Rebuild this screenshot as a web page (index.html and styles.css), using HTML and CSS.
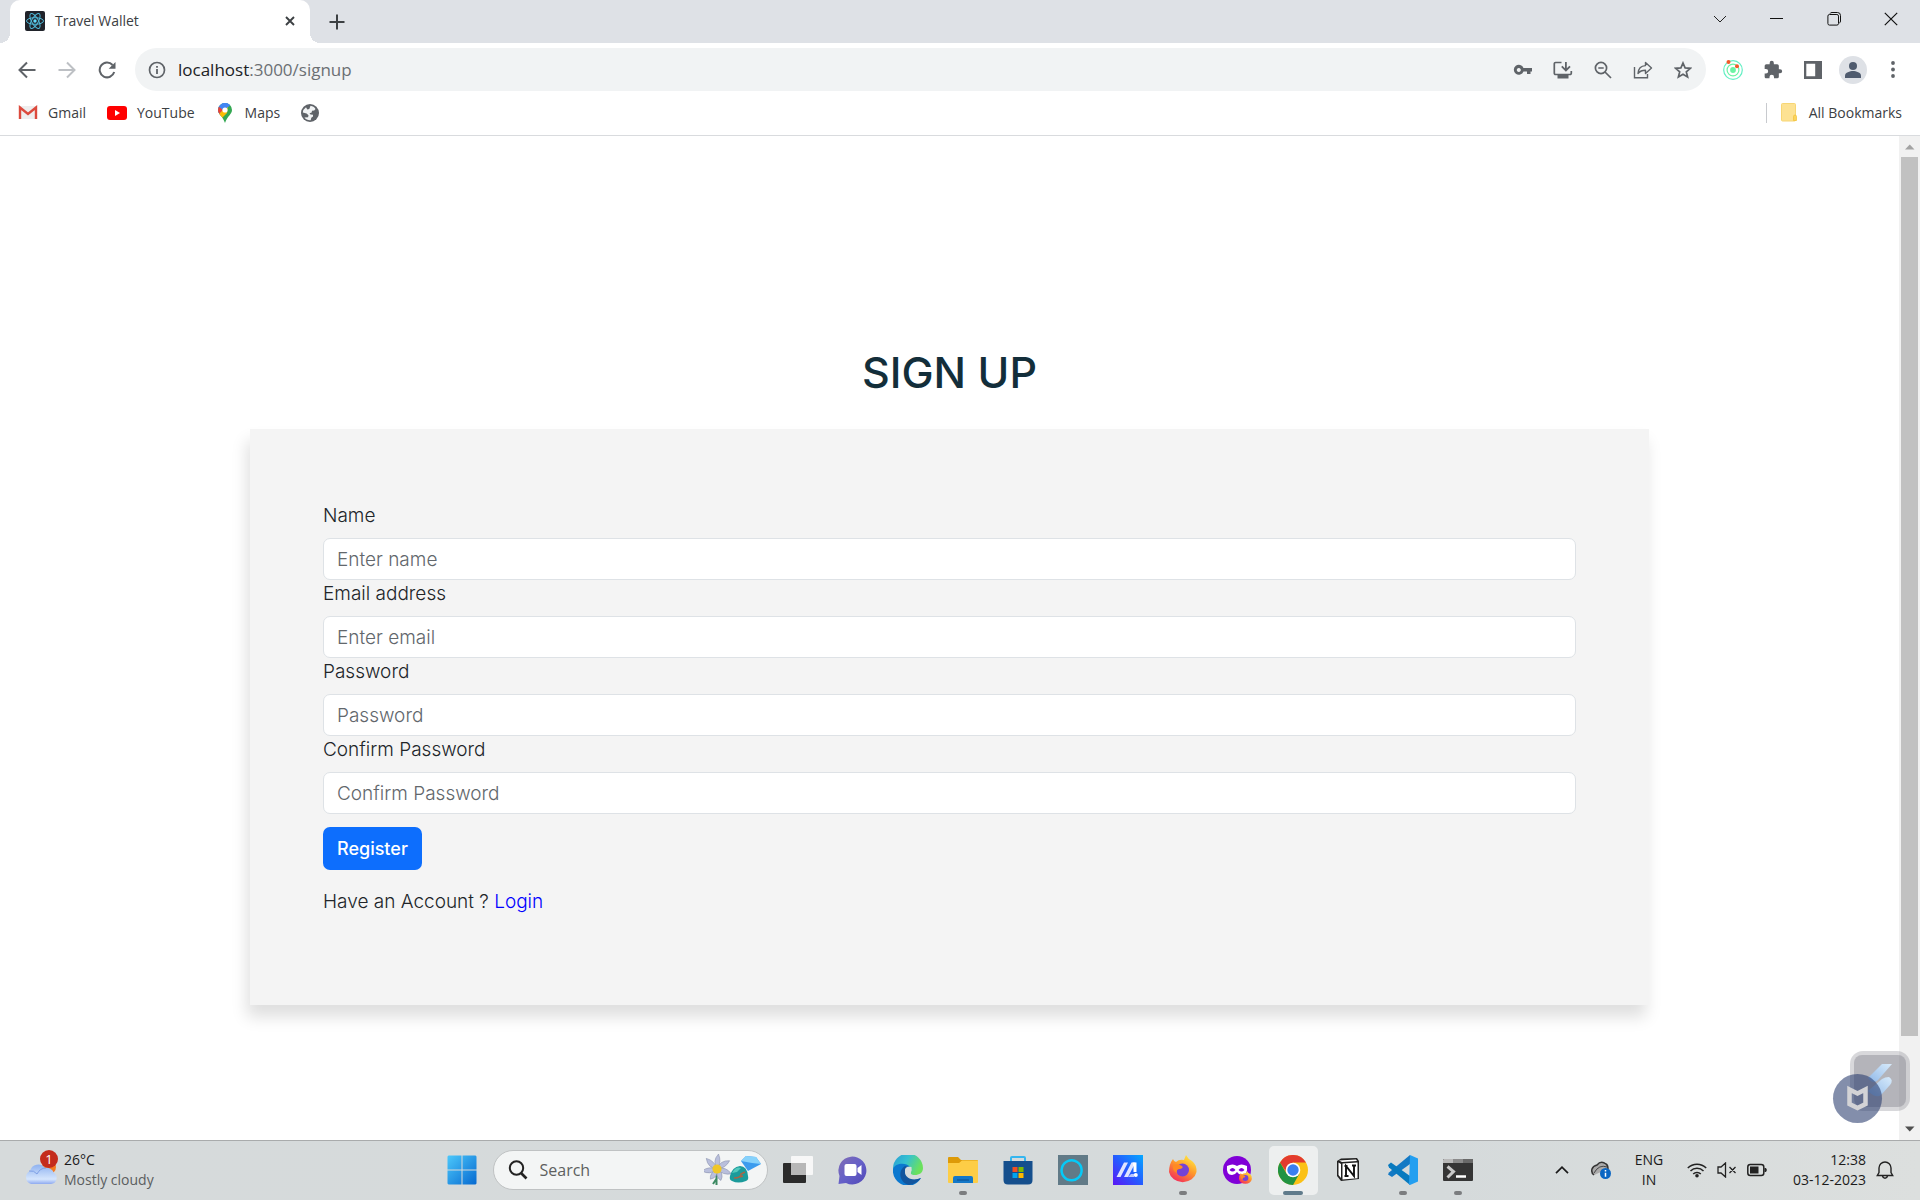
FILE: index.html
```html
<!DOCTYPE html>
<html lang="en">
<head>
<meta charset="utf-8">
<title>Travel Wallet</title>
<link rel="stylesheet" href="styles.css">
</head>
<body>
<header class="browser">
  <div class="tabstrip">
    <div class="tab">
      <svg class="tab-icon" width="20" height="20" viewBox="0 0 20 20"><rect width="20" height="20" rx="2" fill="#20232a"/><g fill="none" stroke="#4fb9d8" stroke-width="1"><ellipse cx="10" cy="10" rx="8.5" ry="3.3"/><ellipse cx="10" cy="10" rx="8.5" ry="3.3" transform="rotate(60 10 10)"/><ellipse cx="10" cy="10" rx="8.5" ry="3.3" transform="rotate(120 10 10)"/></g><circle cx="10" cy="10" r="1.7" fill="#61dafb"/></svg>
      <span class="tab-title">Travel Wallet</span>
      <button class="icon-btn tab-close" aria-label="Close tab"><svg width="10" height="10" viewBox="0 0 10 10"><path d="M1 1l8 8M9 1l-8 8" stroke="#3c4043" stroke-width="1.9"/></svg></button>
    </div>
    <button class="icon-btn new-tab" aria-label="New tab"><svg width="16" height="16" viewBox="0 0 16 16"><path d="M8 .5v15M.5 8h15" stroke="#3c4043" stroke-width="2"/></svg></button>
    <div class="window-controls">
      <button class="icon-btn" aria-label="Search tabs"><svg width="14" height="8" viewBox="0 0 14 8"><path d="M1 1l6 6 6-6" fill="none" stroke="#222"/></svg></button>
      <button class="icon-btn" aria-label="Minimize"><svg width="13" height="13" viewBox="0 0 13 13"><path d="M0 6.5h13" stroke="#111"/></svg></button>
      <button class="icon-btn" aria-label="Restore"><svg width="14" height="14" viewBox="0 0 14 14"><g fill="none" stroke="#111"><rect x=".9" y="2.5" width="10.6" height="10.6" rx="1.6"/><path d="M3 1.6Q3.3.5 5 .5h5.5q3 0 3 3V9q0 1.700-1.200 2"/></g></svg></button>
      <button class="icon-btn" aria-label="Close"><svg width="14" height="14" viewBox="0 0 14 14"><path d="M.8.8l12.400 12.400M13.200.8L.8 13.200" stroke="#111" stroke-width="1.200"/></svg></button>
    </div>
  </div>

  <div class="toolbar">
    <button class="icon-btn" aria-label="Back"><svg width="18" height="18" viewBox="0 0 18 18"><path d="M17.500 9H2M9 1.500L1.500 9 9 16.500" fill="none" stroke="#5f6368" stroke-width="2"/></svg></button>
    <button class="icon-btn" aria-label="Forward"><svg width="18" height="18" viewBox="0 0 18 18"><path d="M.5 9H16M9 1.500L16.500 9 9 16.500" fill="none" stroke="#bdc0c4" stroke-width="2"/></svg></button>
    <button class="icon-btn" aria-label="Reload"><svg width="18" height="18" viewBox="0 0 18 18"><path d="M14.600 4A7.400 7.400 0 1 0 16.200 11" fill="none" stroke="#5f6368" stroke-width="2"/><path d="M17.500 1v6.800h-6.800z" fill="#5f6368"/></svg></button>
    <div class="omnibox">
      <svg class="info" width="18" height="18" viewBox="0 0 18 18"><circle cx="9" cy="9" r="7.500" fill="none" stroke="#5f6368" stroke-width="1.700"/><path d="M9 8v5M9 5v1.800" stroke="#5f6368" stroke-width="1.800"/></svg>
      <div class="url"><span class="host">localhost</span>:3000/signup</div>
      <button class="icon-btn" aria-label="Passwords"><svg width="20" height="12" viewBox="0 0 20 12"><path fill-rule="evenodd" fill="#5f6368" d="M10.500 4H19v3.500h-1.500V10H14V7.500h-3.500A5 5 0 1 1 10.500 4zM5.800 4a2 2 0 1 0 .01 0z"/></svg></button>
      <button class="icon-btn" aria-label="Install app"><svg width="20" height="18" viewBox="0 0 20 18"><path d="M8.500 1.500h-6a1.200 1.200 0 0 0-1.200 1.200v9.600a1.200 1.200 0 0 0 1.200 1.200h14.600a1.200 1.200 0 0 0 1.200-1.200V10" fill="none" stroke="#5f6368" stroke-width="1.700"/><path d="M12.900 1v7.500M8.800 5.400l4.100 4.100L17 5.400" fill="none" stroke="#5f6368" stroke-width="1.800"/><path d="M4.500 14h11v3.500h-11z" fill="#5f6368"/></svg></button>
      <button class="icon-btn" aria-label="Zoom"><svg width="18" height="18" viewBox="0 0 18 18"><g fill="none" stroke="#5f6368" stroke-width="1.700"><circle cx="7" cy="7" r="5.600"/><path d="M4.300 7h5.400M11 11l6 6"/></g></svg></button>
      <button class="icon-btn" aria-label="Share"><svg width="20" height="18" viewBox="0 0 20 18"><path d="M1.500 6v10.800h13V13" fill="none" stroke="#5f6368" stroke-width="1.400"/><path d="M5 12.500C5.300 7.500 8 4.800 12.500 4.600V1.500l6 5.500-6 5.500V9.300C9 9.300 7 10 5 12.500z" fill="none" stroke="#5f6368" stroke-width="1.400" stroke-linejoin="round"/></svg></button>
      <button class="icon-btn" aria-label="Bookmark this page"><svg width="18" height="18" viewBox="0 0 18 18"><path d="M9 2l2.100 4.900 5.300.4-4.100 3.500 1.300 5.200L9 13.200 4.400 16l1.300-5.200L1.600 7.300l5.300-.4z" fill="none" stroke="#5f6368" stroke-width="1.700"/></svg></button>
    </div>
    <button class="icon-btn" aria-label="Extension"><svg width="20" height="22" viewBox="0 0 20 22"><g fill="none" stroke="#63efc4" stroke-width="1.200"><circle cx="10" cy="11" r="9.300"/><circle cx="10" cy="11" r="5.900" stroke="#6bf3a4"/></g><circle cx="10" cy="11" r="2.900" fill="#6bf3a4"/><circle cx="5.500" cy="3" r="2" fill="#f15a29"/><circle cx="14" cy="7.300" r="2" fill="#f15a29"/></svg></button>
    <button class="icon-btn" aria-label="Extensions"><svg width="20" height="20" viewBox="0 0 24 24"><path fill="#5f6368" d="M20.500 11H19V7a2 2 0 0 0-2-2h-4V3.500a2.500 2.500 0 0 0-5 0V5H4a2 2 0 0 0-2 2v3.800h1.500a2.700 2.700 0 0 1 0 5.400H2V20c0 1.100.9 2 2 2h3.800v-1.500a2.700 2.700 0 0 1 5.400 0V22H17a2 2 0 0 0 2-2v-4h1.500a2.500 2.500 0 0 0 0-5z"/></svg></button>
    <button class="icon-btn" aria-label="Side panel"><svg width="18" height="18" viewBox="0 0 18 18"><path fill-rule="evenodd" fill="#5f6368" d="M0 0h18v18H0zM2.300 2.700v12.600h8.900V2.700z"/></svg></button>
    <button class="icon-btn" aria-label="Profile"><svg width="28" height="28" viewBox="0 0 28 28"><circle cx="14" cy="14" r="14" fill="#dee1e6"/><g fill="#4f5b6e"><circle cx="14" cy="10" r="4"/><path d="M6 22v-2.500c0-3 5-4.500 8-4.500s8 1.500 8 4.500V22z"/></g></svg></button>
    <button class="icon-btn" aria-label="Menu"><svg width="4" height="17" viewBox="0 0 4 17"><g fill="#5f6368"><circle cx="2" cy="2" r="1.900"/><circle cx="2" cy="8.500" r="1.900"/><circle cx="2" cy="15" r="1.900"/></g></svg></button>
  </div>

  <nav class="bookmarks">
    <a href="#"><svg width="20" height="16" viewBox="0 0 20 16"><path d="M1 1h18v13H1z" fill="#eee"/><path d="M2 14V2.500l8 6.500 8-6.500V14" fill="none" stroke="#dc4a3d" stroke-width="2.400"/></svg>Gmail</a>
    <a href="#"><svg width="20" height="14" viewBox="0 0 20 14"><rect width="20" height="14" rx="3" fill="#f00"/><path d="M8 4l5 3-5 3z" fill="#fff"/></svg>YouTube</a>
    <a href="#" class="maps"><svg width="14" height="20" viewBox="0 0 14 20"><clipPath id="pin"><path d="M7 0a7 7 0 0 1 7 7c0 4-4.500 6-7 13C4.500 13 0 11 0 7a7 7 0 0 1 7-7z"/></clipPath><g clip-path="url(#pin)"><path d="M0 0h14v20H0z" fill="#34a853"/><path d="M0 0h14L0 15z" fill="#4285f4"/><path d="M0 3l5 4-5 6z" fill="#ea4335"/><path d="M0 12L10 2l-1 8-6 6z" fill="#fbbc04"/><path d="M3 0h10L8 6z" fill="#4285f4"/></g><circle cx="7" cy="7" r="2.600" fill="#fff"/></svg>Maps</a>
    <a href="#" aria-label="Untitled bookmark"><svg width="18" height="18" viewBox="0 0 18 18"><circle cx="9" cy="9" r="9" fill="#5f6368"/><path d="M9.500 1.800c2.300.4 4 1.500 5 3.200l-1.300 1.500-2.200.3-.3 1.800-2.200.7 1 1.300 2.500.2v1.700l-1.700 1.300-.6 2.400c-2.300.3-4.800-.7-6.300-2.700l3.700-.2.400-2L5.600 9.600 1.800 8.500A7.300 7.300 0 0 1 5 3.200l1.300 2.300 2-.6z" fill="#f1f3f4"/></svg></a>
    <a href="#" class="all-bookmarks"><svg width="16" height="19" viewBox="0 0 16 19"><rect x=".5" y=".5" width="14" height="17.500" rx="1" fill="#fde293" stroke="#f7d674"/><path d="M12.500 17.500v-4q0-1.500 1.500-1.500t1.500 1.500v4z" fill="#fbd45c" stroke="#f2c037" stroke-width=".7"/></svg>All Bookmarks</a>
  </nav>
</header>

<main class="viewport">
  <section class="page">
    <div class="container">
      <h1>SIGN UP</h1>
      <form class="card">
        <label for="name">Name</label>
        <input id="name" type="text" placeholder="Enter name">
        <label for="email">Email address</label>
        <input id="email" type="email" placeholder="Enter email">
        <label for="password">Password</label>
        <input id="password" type="password" placeholder="Password">
        <label for="confirm">Confirm Password</label>
        <input id="confirm" type="password" placeholder="Confirm Password">
        <button type="button" class="register">Register</button>
        <p>Have an Account ? <a href="#">Login</a></p>
      </form>
    </div>
  </section>
  <div class="scrollbar">
    <svg width="21" height="21" viewBox="0 0 21 21"><path d="M6 13.500h9.500L10.750 8.500z" fill="#a3a3a3"/></svg>
    <div class="thumb"></div>
    <div class="track"></div>
    <svg width="21" height="21" viewBox="0 0 21 21"><path d="M6 7.500h9.500l-4.750 5z" fill="#505050"/></svg>
  </div>
  <svg class="floating" width="80" height="76" viewBox="0 0 80 76">
    <defs><linearGradient id="bl" x1="0" y1="1" x2="1" y2="0"><stop stop-color="#8fb8e8"/><stop offset="1" stop-color="#d8ebfb"/></linearGradient></defs>
    <rect x="18" y="1" width="60" height="60" rx="13" fill="#70707a" fill-opacity=".27"/>
    <rect x="22" y="5" width="52" height="52" rx="8" fill="#70707a" fill-opacity=".34"/>
    <path d="M36 28L50 14h10L46 30q-5 5-10-2z" fill="url(#bl)"/><path d="M36 41L50 29q3-2 7-2 5 3 1 8L49 45q-5 4-13-4z" fill="url(#bl)"/>
    <circle cx="25.500" cy="48.500" r="24.500" fill="#2a3d6f" fill-opacity=".58"/>
    <path d="M17.500 39.500l8 4 8-4V54l-8 4-8-4z" fill="none" stroke="#d3d3d6" stroke-width="4.500"/>
  </svg>
</main>

<footer class="taskbar">
  <div class="weather">
    <svg width="36" height="40" viewBox="0 0 36 40"><defs><linearGradient id="cl" x1="0" y1="0" x2="0" y2="1"><stop stop-color="#8fb2f0"/><stop offset=".75" stop-color="#d6e6fd"/><stop offset="1" stop-color="#8faaf0"/></linearGradient></defs><circle cx="24" cy="17" r="7" fill="#f47b20"/><path d="M6 34a7 7 0 0 1-1-13 8.500 8.500 0 0 1 15-3 8 8 0 0 1 9 5 6 6 0 0 1-3 11z" fill="url(#cl)"/><path d="M4 21q5-1 8 3 3-6 9-6" fill="none" stroke="#7fa0e6"/><circle cx="24" cy="9" r="9" fill="#c42b1c"/><text x="24" y="14" class="badge-text">1</text></svg>
    <div><div>26°C</div><div class="muted">Mostly cloudy</div></div>
  </div>
  <div class="apps">
    <button class="app" aria-label="Start"><svg width="30" height="30" viewBox="0 0 30 30"><defs><linearGradient id="wn" x2="1" y2="1"><stop stop-color="#4cc8fb"/><stop offset="1" stop-color="#0669d0"/></linearGradient></defs><path fill="url(#wn)" d="M1.500.5H14.500v14H.5v-13zM15.500.5h13l1 1v13h-14zM.5 15.500h14v14h-13l-1-1zM15.500 15.500h14v13l-1 1h-13z"/></svg></button>
    <label class="search"><svg width="20" height="20" viewBox="0 0 20 20"><circle cx="8.500" cy="8" r="6.700" fill="none" stroke="#222" stroke-width="2"/><path d="M13 13l5.500 5.500" stroke="#222" stroke-width="2.600"/></svg><input type="search" placeholder="Search" aria-label="Search">
      <svg width="57" height="32" viewBox="0 0 57 32"><path d="M12.500 15v16M9 30l4-6" stroke="#3d8a63" stroke-width="2"/><g fill="#b9bfdc" stroke="#8089a6" stroke-width=".5"><path d="M13 15Q8 7 14.500 0 18 8 13 15z"/><path d="M13 15Q8 7 14.500 0 18 8 13 15z" transform="rotate(51 13 15)"/><path d="M13 15Q8 7 14.500 0 18 8 13 15z" transform="rotate(103 13 15)"/><path d="M13 15Q8 8 14.500 3 18 8 13 15z" transform="rotate(154 13 15)"/><path d="M13 15Q8 8 14.500 3 18 8 13 15z" transform="rotate(206 13 15)"/><path d="M13 15Q8 7 14.500 0 18 8 13 15z" transform="rotate(257 13 15)"/><path d="M13 15Q8 7 14.500 0 18 8 13 15z" transform="rotate(309 13 15)"/></g><circle cx="13" cy="15" r="4.600" fill="#efc628"/><path d="M37 7l5-5 10 1L57 10 44 17z" fill="#3b9bee"/><path d="M37 7l5-5 10 1 5 7-9-1z" fill="#87d2fb"/><path d="M26 22q2-9 10-10 7 0 8 10 1 4-2 5-8 3-14 0-3-1-2-5z" fill="#1b9b9b"/><path d="M28 19q4-7 9-5l-4 4z" fill="#52c9bd"/><path d="M30 24q7 0 7-4l4-2M36 23l3-1" fill="none" stroke="#a96545" stroke-width="1.500"/></svg>
    </label>
    <button class="app" aria-label="Task view"><svg width="30" height="30" viewBox="0 0 30 30"><rect y="8" width="23" height="20" rx="1" fill="#2b2b2b"/><rect x="8" y="1" width="22" height="19" rx="1" fill="#f7f7f7"/><path d="M8 8h15v12H8z" fill="#b7b7b7"/></svg></button>
    <button class="app" aria-label="Chat"><svg width="30" height="30" viewBox="0 0 30 30"><defs><linearGradient id="ch" x2="1" y2="1"><stop offset=".1" stop-color="#7b6ab8"/><stop offset=".5" stop-color="#6560c8"/><stop offset="1" stop-color="#5148b8"/></linearGradient></defs><path d="M.5 29l1-8A14 14 0 1 1 8 28z" fill="url(#ch)"/><rect x="6.500" y="9" width="12" height="12" rx="2" fill="#fff"/><path d="M19.500 13l4-3v10l-4-3z" fill="#fff"/></svg></button>
    <button class="app" aria-label="Edge"><svg width="30" height="30" viewBox="0 0 30 30"><defs><linearGradient id="e1" y1="0" x2="1" y2=".4"><stop stop-color="#2a9cd4"/><stop offset=".5" stop-color="#35c1d1"/><stop offset="1" stop-color="#6be15c"/></linearGradient></defs><path d="M0 14A15 15 0 0 1 30 13c0 5-4 7-8 7-3 0-5-1-4-3 1-4-2-6-5-6z" fill="url(#e1)"/><path d="M0 14C2 8 13 7 17 12c-4-1-7 1-7 5 0 6 5 8 10 8q4 0 8-2A15 15 0 0 1 0 14z" fill="#0c78cf"/><path d="M12 11c-8 5-5 17 4 19 5-.5 9-3 12-7-7 3-15 1-16-5-.5-3 1-5 4-6z" fill="#12559e"/><path d="M18.500 12q-7-1-6.500 4 0 5 7 6-3-2-1-5 1-2 .5-5z" fill="#d7dcdd"/></svg></button>
    <button class="app running" aria-label="File Explorer"><svg width="30" height="30" viewBox="0 0 30 30"><path d="M0 3q0-1 1-1h9l3 3h16q1 0 1 1v5H0z" fill="#dd9a08"/><path d="M0 8h11l3-2.500h16V27q0 1-1 1H1q-1 0-1-1z" fill="#fdcd46"/><path d="M5 28v-5q0-2 2-2h16q2 0 2 2v5z" fill="#1478c8"/><path d="M9 25h12" stroke="#0a4c8c"/></svg></button>
    <button class="app" aria-label="Microsoft Store"><svg width="30" height="30" viewBox="0 0 30 30"><path d="M8 7V3q0-1 1-1h12q1 0 1 1v4" fill="none" stroke="#35b6ef" stroke-width="2"/><path d="M.5 6h29v19q0 4.500-4.500 4.500H5Q.5 29.500.5 25z" fill="#154f8d"/><path d="M9.500 12h5v5h-5z" fill="#f25022"/><path d="M15.500 12h5v5h-5z" fill="#7fba00"/><path d="M9.500 18h5v5h-5z" fill="#00a4ef"/><path d="M15.500 18h5v5h-5z" fill="#ffb900"/></svg></button>
    <button class="app" aria-label="Alexa"><svg width="30" height="30" viewBox="0 0 30 30"><path d="M0 0h30v30H0z" fill="#617a87"/><path d="M13.500 25.300A10 10 0 1 1 20 23q-3 2.500-6.500 2.300z" fill="none" stroke="#05caf8" stroke-width="2.500"/></svg></button>
    <button class="app" aria-label="MyASUS"><svg width="30" height="30" viewBox="0 0 30 30"><defs><linearGradient id="my" x1="1" y1="0" x2="0" y2="1"><stop stop-color="#05a8ff"/><stop offset=".5" stop-color="#255cff"/><stop offset="1" stop-color="#5b16f5"/></linearGradient></defs><path d="M0 0h30v30H0z" fill="url(#my)"/><path d="M3.500 22L11 7.500h4L7.500 22zM11 22l7.500-14.500h4L15 22z" fill="#e0e4ff"/><path d="M19.500 7.500h4V17h-3v-5z" fill="#fff"/><path d="M15 22l3-3h3v3z" fill="#b9c6ff"/><circle cx="22.800" cy="20" r="2" fill="#fff"/></svg></button>
    <button class="app running" aria-label="Firefox"><svg width="30" height="30" viewBox="0 0 30 30"><defs><linearGradient id="ff" x1=".8" y1="0" x2=".2" y2="1"><stop stop-color="#fff044"/><stop offset=".45" stop-color="#ff9a2a"/><stop offset="1" stop-color="#f2255f"/></linearGradient></defs><g id="fox"><path d="M1 17Q1 9 5 4q1 3 3 3 3-3 8-2l2-5q2 4 6 6 5 4 4.500 11A14 12.500 0 0 1 1 17z" fill="url(#ff)"/><circle cx="14.500" cy="15" r="6.500" fill="#7542d6"/><path d="M5 10q5-2 9 1 2 2-2 3-4 0-3 4-5-2-4-8z" fill="#ff8a22"/></g></svg></button>
    <button class="app" aria-label="Firefox Private Browsing"><svg width="30" height="30" viewBox="0 0 30 30"><circle cx="14" cy="15" r="14" fill="#8000d7"/><path fill-rule="evenodd" fill="#fff" d="M4 11q6-3 10 0 4-3 10 0 1 9-5 9-3 0-5-3-2 3-5 3-6 0-5-9zm2.500 4q3-4 6 0-3 3-6 0zm9 0q3-4 6 0-3 3-6 0z"/><use href="#fox" transform="translate(15.500 16) scale(.47)"/></svg></button>
    <button class="app running active" aria-label="Chrome"><svg width="30" height="30" viewBox="0 0 30 30"><circle cx="15" cy="15" r="15" fill="#fbc116"/><path d="M2 7.500A15 15 0 0 1 28 7.500H15L9 18z" fill="#e33b2e"/><path d="M2 7.500A15 15 0 0 0 15 30l6.500-11.500H8.500z" fill="#229342"/><circle cx="15" cy="15" r="7.300" fill="#fff"/><circle cx="15" cy="15" r="5.700" fill="#3a7ff0"/></svg></button>
    <button class="app" aria-label="Notion"><svg width="24" height="26" viewBox="0 0 24 26"><path d="M1 4l4-2.500L21 1l2 3v18l-18 2-4-5z" fill="#222"/><path d="M3 3.500L20 2.500 21 4 6 5z" fill="#fff"/><path d="M6.500 6.500l15-1v15.700l-15 1.300z" fill="#fff"/><path d="M2.500 5.500L5 7v14l-2.500-3z" fill="#fff"/><path d="M10 19V9l8 10V8M8.500 9h3M16 8.500h4M8.500 19h4" fill="none" stroke="#111" stroke-width="1.900"/></svg></button>
    <button class="app running" aria-label="Visual Studio Code"><svg width="30" height="30" viewBox="0 0 30 30"><path d="M22 0v9L4 22 0 19.500l1-2z" fill="#1379c4"/><path d="M1 12.500L0 10l3-2.500L22 21v9z" fill="#087abf"/><path d="M22 0l8 3.500v23L22 30l-1-1z" fill="#249ff0"/></svg></button>
    <button class="app running" aria-label="Terminal"><svg width="30" height="30" viewBox="0 0 30 30"><path d="M0 4h30v21q0 1-1 1H1q-1 0-1-1z" fill="#353535"/><path d="M0 8V5q0-1 1-1h9v4z" fill="#b9b9b9"/><path d="M10 4h10v4H10z" fill="#8b8b8b"/><path d="M20 4h10v4H20z" fill="#696969"/><path d="M4.500 11.500l6 5-6 6" fill="none" stroke="#c9c9c9" stroke-width="3"/><path d="M13 21.500h10" stroke="#fff" stroke-width="2.500"/></svg></button>
  </div>
  <div class="tray">
    <svg width="14" height="8" viewBox="0 0 14 8"><path d="M1 7.200l6-6 6 6" fill="none" stroke="#1b1b1b" stroke-width="1.700"/></svg>
    <svg width="20" height="20" viewBox="0 0 20 20"><path d="M3 15Q0 13 1 9q1-3 5-4 4-5 9-1 2 1 2 5" fill="#aaa" stroke="#333" stroke-width="1.500"/><path d="M3 13q5-9 13-6" fill="none" stroke="#444"/><circle cx="14.500" cy="13.500" r="5.500" fill="#0b66c3"/><path d="M14.500 12.700v4M14.500 10v1.500" stroke="#fff" stroke-width="1.500"/></svg>
    <div class="lang">ENG<br>IN</div>
    <div class="status">
      <svg width="20" height="16" viewBox="0 0 20 16"><g fill="none" stroke="#222" stroke-width="1.500"><path d="M.8 6a13 13 0 0 1 18.400 0M3.500 9a9.200 9.200 0 0 1 13 0M6.200 12a5.400 5.400 0 0 1 7.600 0"/></g><circle cx="10" cy="13.800" r="1.800" fill="#222"/></svg>
      <svg width="20" height="16" viewBox="0 0 20 16"><path d="M1 5h3l4.500-4v14L4 11H1zM12.500 5l6 6M18.500 5l-6 6" fill="none" stroke="#222" stroke-width="1.300"/></svg>
      <svg width="20" height="14" viewBox="0 0 20 14"><rect x=".8" y="1.500" width="16" height="11" rx="2.500" fill="none" stroke="#222" stroke-width="1.500"/><path d="M3 3.500h8.500v7H3z" fill="#222"/><path d="M17.500 5h1.200l1 1v2l-1 1h-1.200z" fill="#222"/></svg>
    </div>
    <div class="clock">12:38<br>03-12-2023</div>
    <svg class="bell" width="18" height="20" viewBox="0 0 18 20"><path d="M3 12.500V8a6 6 0 0 1 12 0v4.500l1.700 3H1.300zM6.500 16q.5 2.200 2.500 2.200t2.500-2.200" fill="none" stroke="#222" stroke-width="1.400"/></svg>
  </div>
</footer>
</body>
</html>
```
FILE: styles.css
```css
* { box-sizing: border-box; }

body {
  margin: 0;
  min-height: 100vh;
  display: flex;
  flex-direction: column;
  background: #fff;
  color: #3c4043;
  font: 14px/20px "Open Sans", "Noto Sans", sans-serif;
}

svg { display: block; flex: none; }
button, input { font: inherit; }

.icon-btn {
  display: flex;
  align-items: center;
  justify-content: center;
  flex: none;
  width: 40px;
  padding: 0;
  border: 0;
  background: none;
}

/* Browser frame */
.tabstrip { display: flex; height: 43px; padding: 0 1px 0 10px; background: #dee1e6; }

.tab {
  position: relative;
  display: flex;
  align-items: center;
  width: 300px;
  padding: 0 5px 2px 15px;
  border-radius: 10px 10px 0 0;
  background: #fff;
}
.tab::before, .tab::after {
  content: "";
  position: absolute;
  bottom: 0;
  width: 10px;
  height: 10px;
}
.tab::before { right: 100%; background: radial-gradient(circle at 0 0, transparent 10px, #fff 10px); }
.tab::after { left: 100%; background: radial-gradient(circle at 100% 0, transparent 10px, #fff 10px); }
.tab-title { flex: 1; margin-left: 10px; }
.tab-close { width: 30px; height: 30px; }
.new-tab { width: 54px; }
.window-controls { display: flex; height: 37px; margin-left: auto; }
.window-controls .icon-btn { width: 57px; }

.toolbar { display: flex; height: 53px; padding: 5px 7px; }
.omnibox {
  display: flex;
  flex: 1;
  align-items: center;
  margin: 0 7px 0 8px;
  padding: 0 3px 0 13px;
  border-radius: 22px;
  background: #f1f3f4;
}
.url { flex: 1; margin-left: 12px; font-size: 17px; color: #6b6f73; }
.host { color: #202124; }

.bookmarks {
  display: flex;
  align-items: center;
  height: 40px;
  padding: 0 18px 6px;
  gap: 21px;
  border-bottom: 1px solid #d9dbde;
}
.bookmarks a { display: flex; align-items: center; gap: 10px; color: #3c4043; text-decoration: none; }
.bookmarks .maps { gap: 13px; padding-left: 2px; }
.bookmarks .all-bookmarks { gap: 12px; margin-left: auto; padding-left: 14px; border-left: 1px solid #c8cace; }

/* Sign-up page */
.viewport { position: relative; display: flex; flex: 1; }
.page {
  flex: 1;
  padding: 207px 24px 0;
  color: #212529;
  font: 300 19px/28px Inter, sans-serif;
}
.container { max-width: 1399px; margin: 0 auto; }
h1 {
  margin: 0 0 28px;
  text-align: center;
  color: #132e3a;
  font-size: 43px;
  font-weight: 500;
  line-height: 58px;
}
.card {
  padding: 73px 73px 76px;
  background: #f4f4f4;
  box-shadow: -3px 12px 15px rgba(0, 0, 0, .13);
}
.card label { display: block; margin-bottom: 8px; }
.card input {
  display: block;
  width: 100%;
  height: 42px;
  padding: 0 13px;
  border: 1px solid #dee2e6;
  border-radius: 7px;
  background: #fff;
  color: #212529;
}
.card input::placeholder { color: #62676c; opacity: 1; }
.register {
  display: block;
  height: 43px;
  margin-top: 13px;
  padding: 0 14px;
  border: 0;
  border-radius: 7px;
  background: #0d6efd;
  color: #fff;
  font-size: 18px;
  font-weight: 500;
}
.card p { margin: 18px 0 13px; }
.card a { color: #00f; text-decoration: none; }

.scrollbar { display: flex; flex-direction: column; width: 21px; background: #f1f1f1; }
.thumb { flex: 879; margin: 0 2px; background: #c1c1c1; }
.track { flex: 83; }
.floating { position: absolute; right: 8px; bottom: 14px; }

/* Taskbar */
.taskbar {
  display: grid;
  grid-template-columns: 1fr auto 1fr;
  height: 60px;
  padding-bottom: 1px;
  border-top: 1px solid #a9abac;
  background: linear-gradient(90deg, #d6dadb, #d5dadb 75%, #dcdfde);
  color: #1b1b1b;
}
.weather { display: flex; align-items: center; padding-left: 25px; gap: 3px; }
.muted { color: #5b5e60; }
.badge-text { fill: #fff; font-size: 13px; text-anchor: middle; }
.apps { display: flex; align-items: center; }
.app {
  position: relative;
  display: flex;
  align-items: center;
  justify-content: center;
  width: 49px;
  height: 49px;
  margin: 0 3px;
  padding: 0;
  border: 0;
  border-radius: 5px;
  background: none;
}
.active { background: #edefef; }
.running::after {
  content: "";
  position: absolute;
  bottom: 0;
  width: 8px;
  height: 4px;
  border-radius: 2px;
  background: #7b7d7f;
}
.active::after { width: 20px; background: #607b8b; }
.search {
  display: flex;
  align-items: center;
  width: 275px;
  height: 40px;
  margin: 0 3px;
  padding: 0 6px 0 14px;
  border: 1px solid #bfc2c3;
  border-radius: 20px;
  background: #f3f5f5;
}
.search input {
  flex: 1;
  min-width: 0;
  margin-left: 10px;
  border: 0;
  background: none;
  font-size: 16px;
}
.search input::placeholder { color: #5d5f60; opacity: 1; }
.tray { display: flex; align-items: center; justify-content: flex-end; gap: 22px; padding-right: 26px; }
.status { display: flex; align-items: center; gap: 10px; }
.lang { width: 32px; text-align: center; }
.clock { min-width: 77px; text-align: right; }
.bell { margin-left: -12px; }
```
